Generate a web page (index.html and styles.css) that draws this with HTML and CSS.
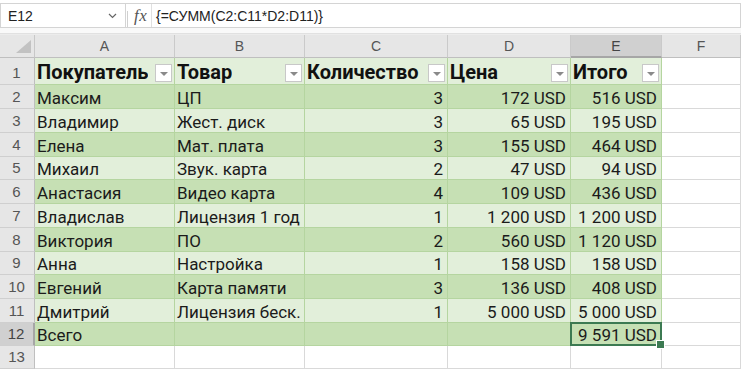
FILE: index.html
```html
<!DOCTYPE html>
<html lang="ru">
<head>
<meta charset="utf-8">
<title>Excel</title>
<link rel="stylesheet" href="styles.css">
</head>
<body>
<div class="fbar">
  <div class="namebox"><span>E12</span>
    <svg class="chev" width="9" height="6" viewBox="0 0 9 6"><path d="M1 1 L4.5 4.5 L8 1" fill="none" stroke="#666" stroke-width="1.2"/></svg>
  </div>
  <div class="fxbox"><span class="sep"></span><span class="fx">fx</span></div>
  <div class="formula">{=СУММ(C2:C11*D2:D11)}</div>
</div>
<div class="band"></div>
<div class="sheet">
  <div class="corner"><span class="tri"></span></div>
  <div class="ch">A</div><div class="ch">B</div><div class="ch">C</div><div class="ch">D</div><div class="ch sel">E</div><div class="ch">F</div>

  <div class="rh">1</div>
  <div class="c t1 th"><span class="lbl">Покупатель</span><span class="fb"><i></i></span></div>
  <div class="c t1 th"><span class="lbl">Товар</span><span class="fb"><i></i></span></div>
  <div class="c t1 th"><span class="lbl">Количество</span><span class="fb"><i></i></span></div>
  <div class="c t1 th"><span class="lbl">Цена</span><span class="fb"><i></i></span></div>
  <div class="c t1 th"><span class="lbl">Итого</span><span class="fb"><i></i></span></div>
  <div class="c e"></div>

  <div class="rh">2</div>
  <div class="c t2">Максим</div><div class="c t2">ЦП</div><div class="c t2 n">3</div><div class="c t2 n">172 USD</div><div class="c t2 n">516 USD</div><div class="c e"></div>

  <div class="rh">3</div>
  <div class="c t1">Владимир</div><div class="c t1">Жест. диск</div><div class="c t1 n">3</div><div class="c t1 n">65 USD</div><div class="c t1 n">195 USD</div><div class="c e"></div>

  <div class="rh">4</div>
  <div class="c t2">Елена</div><div class="c t2">Мат. плата</div><div class="c t2 n">3</div><div class="c t2 n">155 USD</div><div class="c t2 n">464 USD</div><div class="c e"></div>

  <div class="rh">5</div>
  <div class="c t1">Михаил</div><div class="c t1">Звук. карта</div><div class="c t1 n">2</div><div class="c t1 n">47 USD</div><div class="c t1 n">94 USD</div><div class="c e"></div>

  <div class="rh">6</div>
  <div class="c t2">Анастасия</div><div class="c t2">Видео карта</div><div class="c t2 n">4</div><div class="c t2 n">109 USD</div><div class="c t2 n">436 USD</div><div class="c e"></div>

  <div class="rh">7</div>
  <div class="c t1">Владислав</div><div class="c t1">Лицензия 1 год</div><div class="c t1 n">1</div><div class="c t1 n">1 200 USD</div><div class="c t1 n">1 200 USD</div><div class="c e"></div>

  <div class="rh">8</div>
  <div class="c t2">Виктория</div><div class="c t2">ПО</div><div class="c t2 n">2</div><div class="c t2 n">560 USD</div><div class="c t2 n">1 120 USD</div><div class="c e"></div>

  <div class="rh">9</div>
  <div class="c t1">Анна</div><div class="c t1">Настройка</div><div class="c t1 n">1</div><div class="c t1 n">158 USD</div><div class="c t1 n">158 USD</div><div class="c e"></div>

  <div class="rh">10</div>
  <div class="c t2">Евгений</div><div class="c t2">Карта памяти</div><div class="c t2 n">3</div><div class="c t2 n">136 USD</div><div class="c t2 n">408 USD</div><div class="c e"></div>

  <div class="rh">11</div>
  <div class="c t1">Дмитрий</div><div class="c t1">Лицензия беск.</div><div class="c t1 n">1</div><div class="c t1 n">5 000 USD</div><div class="c t1 n">5 000 USD</div><div class="c e"></div>

  <div class="rh sel">12</div>
  <div class="c t2">Всего</div><div class="c t2"></div><div class="c t2"></div><div class="c t2"></div><div class="c t2 n act">9 591 USD</div><div class="c e"></div>

  <div class="rh">13</div>
  <div class="c e"></div><div class="c e"></div><div class="c e"></div><div class="c e"></div><div class="c e"></div><div class="c e"></div>
</div>
</body>
</html>
```
FILE: styles.css
```css
* { box-sizing: border-box; }
html, body { margin: 0; padding: 0; background: #ffffff; }
body { width: 743px; height: 372px; overflow: hidden; }

.fbar {
  margin-top: 3px;
  height: 25px;
  width: 741px;
  display: flex;
  border: 1px solid #d4d4d4;
  font-family: "Liberation Sans", Arial, sans-serif;
  font-size: 14px;
  color: #222;
}
.namebox {
  width: 125px;
  display: flex;
  align-items: center;
  justify-content: space-between;
  padding: 0 8px 0 7px;
  border-right: 1px solid #d4d4d4;
}
.chev { margin-top: 1px; }
.fxbox {
  width: 26px;
  display: flex;
  align-items: center;
  border-right: 1px solid #e0e0e0;
}
.sep { width: 1px; height: 16px; margin-top: 6px; background: #d0d0d0; margin-left: 1px; }
.fx {
  font-family: "Liberation Serif", "Times New Roman", serif;
  font-style: italic;
  font-size: 17px;
  color: #555;
  margin-left: 6px;
  letter-spacing: 0.5px;
}
.formula {
  flex: 1;
  display: flex;
  align-items: center;
  padding-left: 4px;
}

.band {
  height: 6px;
  width: 741px;
  border-bottom: 1px solid #e1e1e1;
  background: #f9f9f9;
}

.sheet {
  display: grid;
  width: 741px;
  grid-template-columns: 35px 140px 130px 143px 123px 91px 79px;
  grid-template-rows: 23px 27px 24px 24px 24px 23px 24px 24px 24px 23px 24px 24px 23px 23px;
  border-top: 1px solid #ececec;
  font-family: "Roboto", "Noto Sans", sans-serif;
  font-size: 17px;
  color: #1b1b1b;
}

.corner {
  background: #e6e6e6;
  border-right: 1px solid #c8c8c8;
  border-bottom: 1px solid #bfbfbf;
  display: flex;
  justify-content: flex-end;
  align-items: flex-end;
  padding: 0 3px 4px 0;
}
.tri {
  width: 15px;
  height: 13px;
  background: #c2c2c2;
  clip-path: polygon(100% 0, 100% 100%, 0 100%);
}
.ch {
  background: #e6e6e6;
  border-right: 1px solid #cacaca;
  border-bottom: 1px solid #bfbfbf;
  display: flex;
  align-items: center;
  justify-content: center;
  font-family: "Liberation Sans", Arial, sans-serif;
  font-size: 14px;
  color: #555;
}
.ch.sel {
  background: #d0d0d0;
  border-bottom: 2px solid #a6a6a6;
  color: #444;
}
.rh {
  background: #e6e6e6;
  border-right: 1px solid #bfbfbf;
  border-bottom: 1px solid #cfcfcf;
  display: flex;
  align-items: flex-end;
  justify-content: center;
  padding: 0 1px 3px 0;
  font-family: "Liberation Sans", Arial, sans-serif;
  font-size: 15px;
  color: #555;
}
.rh.sel { background: #d0d0d0; border-right: 2px solid #a6a6a6; color: #444; }

.c {
  display: flex;
  align-items: flex-end;
  white-space: nowrap;
  overflow: hidden;
  padding: 0 4px 1px 2px;
  line-height: 17px;
  border-right: 1px solid #b5d5a0;
  border-bottom: 1px solid #b5d5a0;
}
.t1 { background: #e2efda; }
.t2 { background: #c6e0b4; }
.e { background: #ffffff; border-right: 1px solid #d9d9d9; border-bottom: 1px solid #d9d9d9; }
.n { justify-content: flex-end; }

.th {
  font-weight: bold;
  font-size: 20px;
  line-height: 22px;
  justify-content: space-between;
  align-items: flex-end;
  padding: 0 2px 1px 2px;
  color: #111;
}
.lbl { overflow: hidden; min-width: 0; }
.fb {
  width: 17px;
  height: 18px;
  flex: none;
  align-self: flex-end;
  margin-bottom: 1px;
  margin-left: 2px;
  background: #ffffff;
  border: 1px solid #c8c8c8;
  display: flex;
  align-items: center;
  justify-content: center;
}
.fb i {
  width: 0; height: 0;
  border-left: 4px solid transparent;
  border-right: 4px solid transparent;
  border-top: 4px solid #8a8a8a;
  margin-top: 1px;
}

.act { position: relative; overflow: visible; }
.act::after {
  content: "";
  position: absolute;
  left: -1px; top: -1px; right: -1px; bottom: -1px;
  border: 2px solid #3c7a52;
  pointer-events: none;
}
.act::before {
  content: "";
  position: absolute;
  right: -4px; bottom: -4px;
  width: 7px; height: 7px;
  background: #3c7a52;
  border: 1px solid #ffffff;
  z-index: 2;
}
```
